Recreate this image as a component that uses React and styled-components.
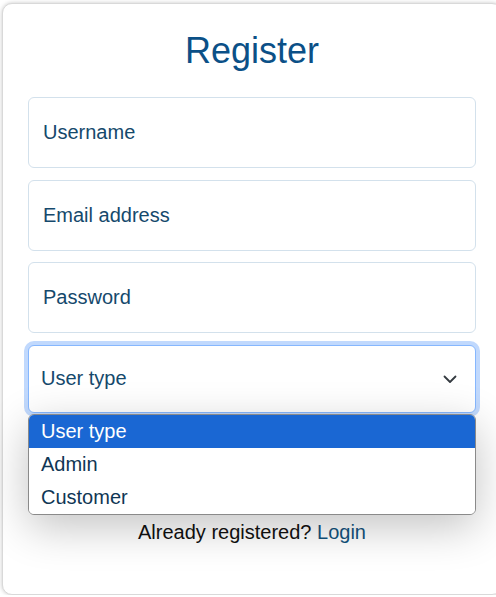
import styled, { createGlobalStyle } from 'styled-components'

const GlobalStyle = createGlobalStyle`
  html, body {
    margin: 0;
    padding: 0;
    background: #ffffff;
    overflow: hidden;
    font-family: "Liberation Sans", Arial, sans-serif;
  }
  * {
    box-sizing: border-box;
  }
`;

const options = ["User type", "Admin", "Customer"];

function App() {
  return (
    <>
      <GlobalStyle />
      <Card>
        <Title>Register</Title>
        <Form>
          <Field type="text" placeholder="Username" />
          <Field type="email" placeholder="Email address" />
          <Field type="password" placeholder="Password" />
          <SelectWrap>
            <SelectBox>
              <span>User type</span>
              <svg width="16" height="16" viewBox="0 0 16 16">
                <path
                  d="M2.5 5.5 8 11l5.5-5.5"
                  fill="none"
                  stroke="#343a40"
                  strokeWidth="1.8"
                  strokeLinecap="round"
                  strokeLinejoin="round"
                />
              </svg>
            </SelectBox>
            <Menu>
              {options.map((o, i) => (
                <Option key={o} active={i === 0}>
                  {o}
                </Option>
              ))}
            </Menu>
          </SelectWrap>
          <SubmitButton>Register</SubmitButton>
        </Form>
        <Footer>
          Already registered? <LoginLink href="#">Login</LoginLink>
        </Footer>
      </Card>
    </>
  );
}

export default App

const Card = styled.div`
  margin: 3px 0 0 2px;
  width: 500px;
  height: 592px;
  padding: 25px 25px 0;
  background: #fff;
  border: 1px solid #d9d9d9;
  border-radius: 10px;
  box-shadow: 0 0 4px rgba(0, 0, 0, 0.22);
`;

const Title = styled.h1`
  margin: 0;
  text-align: center;
  font-size: 36px;
  line-height: 43px;
  font-weight: 400;
  color: #0b5087;
`;

const Form = styled.div`
  margin-top: 25px;
  display: flex;
  flex-direction: column;
  gap: 11.67px;
`;

const Field = styled.input`
  width: 100%;
  height: 71px;
  padding: 0 14px;
  border: 1px solid #d3e1ec;
  border-radius: 6px;
  font-family: inherit;
  font-size: 20px;
  color: #15496c;
  outline: none;

  &::placeholder {
    color: #15496c;
  }
`;

const SelectWrap = styled.div`
  position: relative;
  z-index: 2;
`;

const SelectBox = styled.div`
  height: 68px;
  display: flex;
  align-items: center;
  justify-content: space-between;
  padding: 0 17px 0 12px;
  border: 1px solid #86b7fe;
  border-radius: 6px;
  box-shadow: 0 0 0 4px #c1d9fd;
  font-size: 20px;
  color: #15496c;
  background: #fff;

  svg {
    margin-top: 1px;
  }
`;

const Menu = styled.div`
  position: absolute;
  top: calc(100% + 1px);
  left: 0;
  right: 0;
  background: #fff;
  border: 1px solid #8a8a8a;
  border-radius: 6px;
  overflow: hidden;
  box-shadow: 0 12px 44px rgba(0, 0, 0, 0.24);
`;

const Option = styled.div`
  height: 33px;
  display: flex;
  align-items: center;
  padding: 0 12px;
  font-size: 20px;
  color: ${(props) => (props.active ? "#ffffff" : "#0f3654")};
  background: ${(props) => (props.active ? "#1a67d3" : "#ffffff")};
`;

const SubmitButton = styled.button`
  margin-top: 12px;
  height: 56px;
  border: none;
  border-radius: 6px;
  background: #1a67d3;
  color: #fff;
  font-family: inherit;
  font-size: 20px;
`;

const Footer = styled.p`
  margin: 24px 0 0;
  text-align: center;
  font-size: 20px;
  line-height: 30px;
  color: #111;
`;

const LoginLink = styled.a`
  color: #13537e;
  text-decoration: none;
`;
